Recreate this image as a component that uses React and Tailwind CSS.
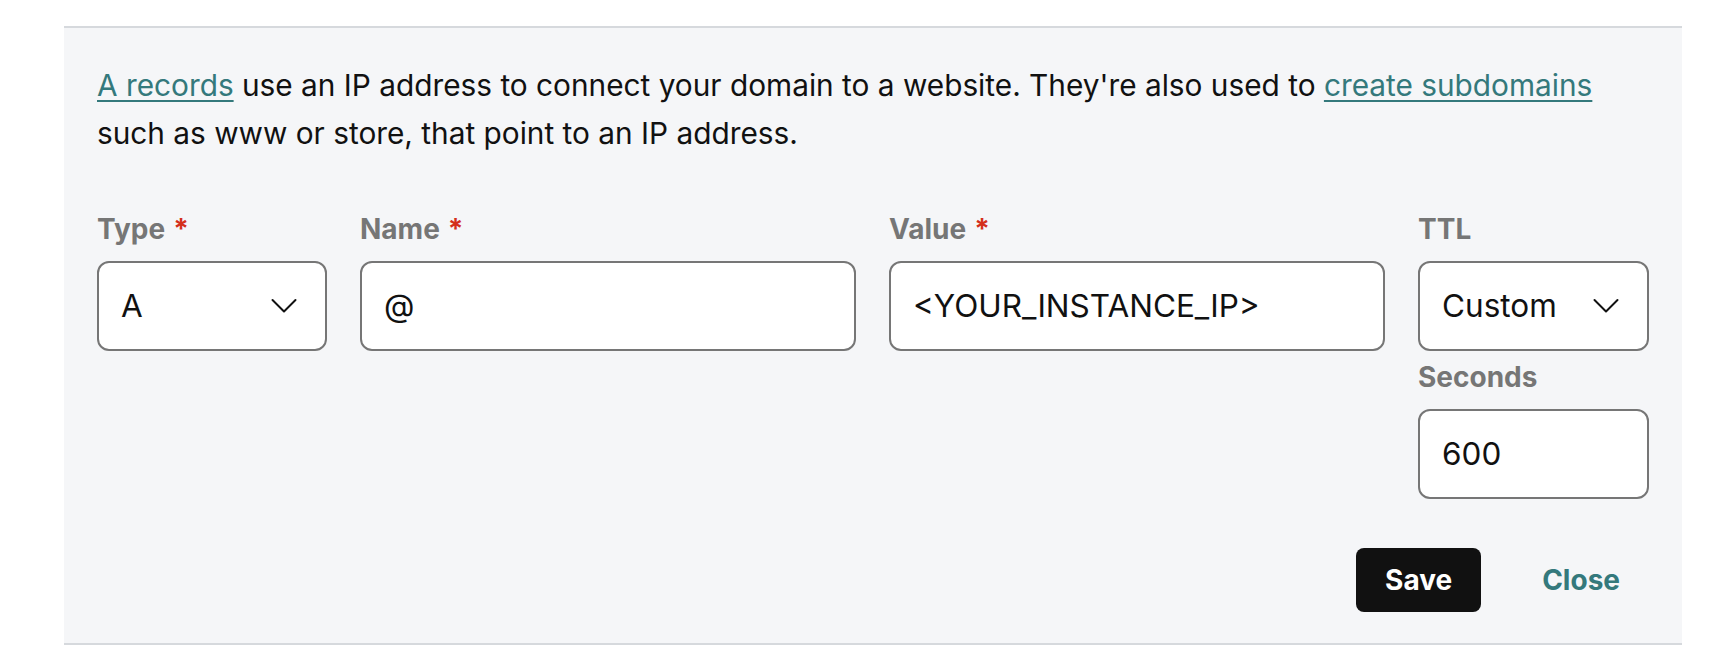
import { useState } from "react";

function Chevron() {
  return (
    <svg width="26" height="16" viewBox="0 0 26 16" fill="none" className="shrink-0">
      <path d="M1.5 2 L13 13.5 L24.5 2" stroke="#111" strokeWidth="2" strokeLinecap="round" strokeLinejoin="round" />
    </svg>
  );
}

function Label({ children, required }) {
  return (
    <label className="mb-3 block text-[28px] font-bold leading-[40px] text-[#767676]">
      {children}
      {required && <span className="ml-2 text-[#d42f1b]">*</span>}
    </label>
  );
}

function Box({ children }) {
  return (
    <div className="flex h-[90px] items-center justify-between rounded-[12px] border-2 border-[#767676] bg-white pl-[22px] pr-[28px] text-[31.5px] text-[#111]">
      {children}
    </div>
  );
}

export default function App() {
  const [name] = useState("@");

  return (
    <div className="min-h-[664px] bg-white pt-[26px] font-['Inter',sans-serif]">
      <section className="ml-[64px] mr-[46px] border-y-2 border-[#d6d9dd] bg-[#f5f6f8] px-[33px] pb-[31px] pt-[33px]">
        <p className="text-[29.8px] leading-[48px] text-[#111]">
          <a href="#" className="text-[#34797c] underline decoration-2 underline-offset-[4px]">A records</a> use an IP
          address to connect your domain to a website. They're also used to{" "}
          <a href="#" className="text-[#34797c] underline decoration-2 underline-offset-[4px]">create subdomains</a>
          <br />
          such as www or store, that point to an IP address.
        </p>

        <div className="mt-[52px] grid grid-cols-[230px_1fr_1fr_231px] gap-x-[33px]">
          <div>
            <Label required>Type</Label>
            <Box>
              <span>A</span>
              <Chevron />
            </Box>
          </div>
          <div>
            <Label required>Name</Label>
            <Box>
              <span>{name}</span>
            </Box>
          </div>
          <div>
            <Label required>Value</Label>
            <Box>
              <span>&lt;YOUR_INSTANCE_IP&gt;</span>
            </Box>
          </div>
          <div>
            <Label>TTL</Label>
            <Box>
              <span>Custom</span>
              <Chevron />
            </Box>
            <div className="mt-[6px]">
              <Label>Seconds</Label>
              <Box>
                <span>600</span>
              </Box>
            </div>
          </div>
        </div>

        <div className="mt-[49px] flex justify-end gap-[32px]">
          <button className="h-[64px] rounded-[8px] bg-[#111] px-[29px] text-[28px] font-bold text-white">Save</button>
          <button className="h-[64px] rounded-[8px] px-[29px] text-[28px] font-bold text-[#34797c]">Close</button>
        </div>
      </section>
    </div>
  );
}
